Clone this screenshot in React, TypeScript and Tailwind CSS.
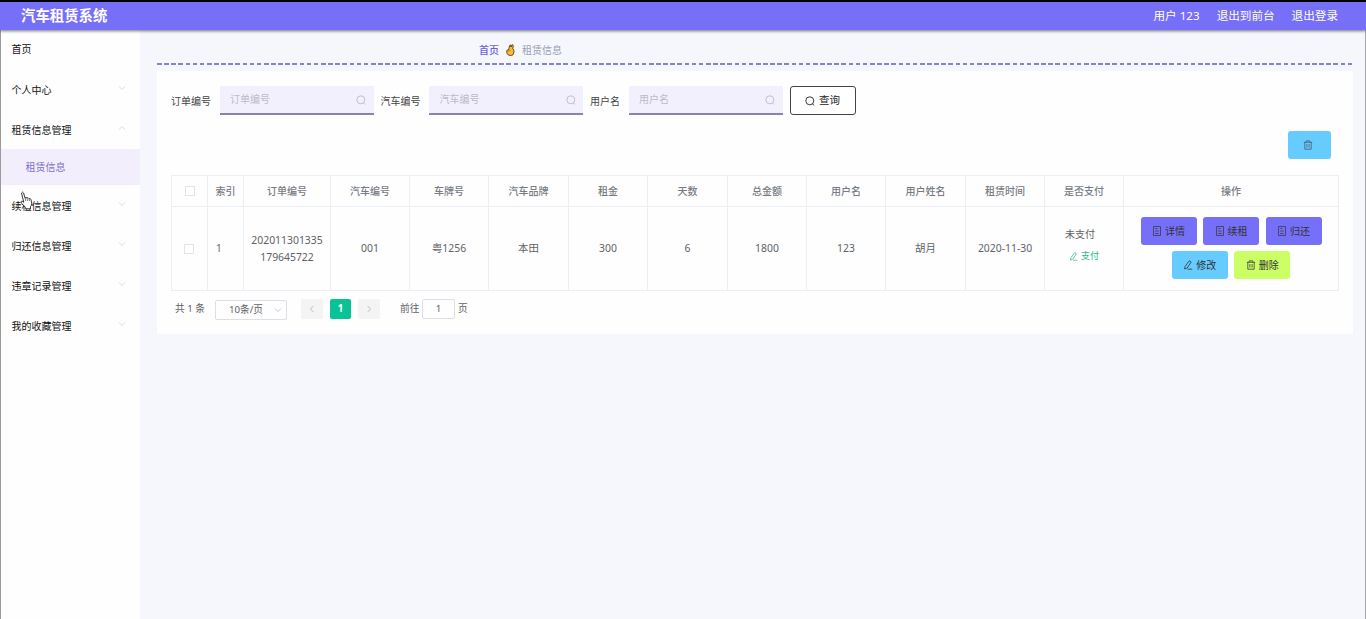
import React from 'react';

// --- Icons ---
const SearchIcon: React.FC<{ className?: string }> = ({ className = '' }) => (
  <svg className={className} width="10" height="10" viewBox="0 0 10 10" fill="none" stroke="currentColor" strokeWidth="0.9">
    <circle cx="4.8" cy="4.8" r="4" />
    <path d="M7.4 7.9 9.2 9.4" />
  </svg>
);

const TrashIcon: React.FC<{ className?: string }> = ({ className = '' }) => (
  <svg className={className} width="10" height="10" viewBox="0 0 10 10" fill="none" stroke="currentColor" strokeWidth="0.75">
    <path d="M0.8 2.3h8.4M3.2 2.2V0.9h3.6v1.3M1.8 2.3v6.9h6.4V2.3M3.9 4v3.5M6.1 4v3.5" />
  </svg>
);

const DocIcon: React.FC = () => (
  <svg width="10" height="10" viewBox="0 0 10 10" fill="none" stroke="currentColor" strokeWidth="0.7">
    <path d="M1.5 0.5h7v9h-7zM3.2 2.5h2.2M3.2 5h3.4M3.2 7.5h3.4" />
  </svg>
);

const EditIcon: React.FC<{ size?: number }> = ({ size = 10 }) => (
  <svg width={size} height={size} viewBox="0 0 10 10" fill="none" stroke="currentColor" strokeWidth="0.8">
    <path d="M6.3 0.8 8.2 2 4.2 8 1.6 9 2 6.5zM4.6 9.2h4.6" />
  </svg>
);

const Chevron: React.FC<{ dir: 'up' | 'down' | 'left' | 'right'; className?: string }> = ({ dir, className = '' }) => {
  const paths = {
    up: 'M1 5.5 4 2.5 7 5.5',
    down: 'M1 2.5 4 5.5 7 2.5',
    left: 'M5.3 1 2.5 4 5.3 7',
    right: 'M2.7 1 5.5 4 2.7 7',
  };
  return (
    <svg className={className} width="8" height="8" viewBox="0 0 8 8" fill="none" stroke="currentColor" strokeWidth="0.9">
      <path d={paths[dir]} />
    </svg>
  );
};

const HandIcon: React.FC = () => (
  <svg width="9" height="12" viewBox="0 0 9 12" stroke="#3c2a08" strokeWidth="0.8" strokeLinejoin="round">
    <path d="M2.7 5.5 3.6 1.5Q4.2.4 4.9 1.4L5 3 5.9.9Q7 .3 7.2 1.4L6.8 5Q8.3 5.6 8 8L7 10.8Q4.8 12.2 2.3 11 .5 9.8.7 7.2.9 5.6 2.7 5.5z" fill="#ffbd2c" />
    <path d="M2.2 6v1.6M4 5.6v1.8" fill="none" strokeWidth="0.4" />
  </svg>
);

const Pointer: React.FC = () => (
  <svg className="absolute left-[20px] top-[191px]" width="13" height="19" viewBox="0 0 13 19" fill="#fff" stroke="#222" strokeWidth="0.9" strokeLinejoin="round">
    <path d="M1.5 2Q2.3.3 3.6 2L5 7Q6 5.7 7 7 8.3 6.2 9 7.7 10.5 7 11 8.8L11.8 12Q11.8 14.5 10.5 15.5V17.8H5.4V16.3L1.7 12.3Q.2 10.7 1.5 10.2 2.6 10 3.8 11.3z" />
    <path d="M5 7l.8 3M7 7.4l.6 2.5M9 8l.5 2.1" fill="none" strokeWidth="0.6" />
  </svg>
);

// --- Sidebar ---
const menus = ['续租信息管理', '归还信息管理', '违章记录管理', '我的收藏管理'];

const MenuItem: React.FC<{ label: string; open?: boolean }> = ({ label, open }) => (
  <li className="flex h-10 items-center justify-between pl-[10.5px] pr-[14px]">
    <span className="pt-[2px]">{label}</span>
    <Chevron dir={open ? 'up' : 'down'} className="-mt-[3px] text-[#d5d5da]" />
  </li>
);

const Sidebar: React.FC = () => (
  <aside className="w-[140px] shrink-0 border-l border-[#9b9b9e] bg-[#fefefe] text-[10px] text-[#111]">
    <ul>
      <li className="flex h-10 items-center pl-[10.5px]">首页</li>
      <MenuItem label="个人中心" />
      <MenuItem label="租赁信息管理" open />
      <li className="flex h-9 items-center bg-[#f2eefb] pl-[24.5px] text-[#7c70d8]">租赁信息</li>
      {menus.map(m => <MenuItem key={m} label={m} />)}
    </ul>
  </aside>
);

// --- Search field ---
const Field: React.FC<{ label: string; labelWidth?: string }> = ({ label, labelWidth = 'w-[48.5px]' }) => (
  <div className="flex shrink-0 items-center">
    <label className={`shrink-0 pt-px text-[#444] ${labelWidth}`}>{label}</label>
    <div className="flex h-[29px] w-[154px] items-center justify-between border-b-2 border-[#8a85a2] bg-[#f3f0fd] pl-[10.5px] pr-[7.5px] text-[#bcbac8]">
      <span>{label}</span>
      <SearchIcon />
    </div>
  </div>
);

// --- Table ---
const columns = [
  { title: '订单编号', value: '202011301335179645722' },
  { title: '汽车编号', value: '001' },
  { title: '车牌号', value: '粤1256' },
  { title: '汽车品牌', value: '本田' },
  { title: '租金', value: '300' },
  { title: '天数', value: '6' },
  { title: '总金额', value: '1800' },
  { title: '用户名', value: '123' },
  { title: '用户姓名', value: '胡月' },
  { title: '租赁时间', value: '2020-11-30' },
];

const widths = [36, 36, 87, 79, 79, 80, 79, 80, 79, 79, 80, 79, 79, 215];

const Checkbox: React.FC = () => <span className="mx-auto block size-[10px] border border-[#e2e4ea] bg-white" />;

const ActionButton: React.FC<{ color: string; icon: React.ReactNode; children: React.ReactNode }> = ({ color, icon, children }) => (
  <button className={`flex h-[28px] w-[56px] items-center justify-center gap-[3px] rounded-[3px] text-[10px] text-[#333] ${color}`}>
    {icon}
    {children}
  </button>
);

const cell = 'border-b border-r border-[#ebeef2] p-0';

const OrderTable: React.FC = () => (
  <table className="w-[1168px] table-fixed border-separate border-spacing-0 border-l border-t border-[#ebeef2] text-center text-[10px] text-[#606266]">
    <colgroup>
      {widths.map((w, i) => <col key={i} style={{ width: w }} />)}
    </colgroup>
    <thead>
      <tr className="h-[31px] text-[#777b82]">
        <th className={cell}><Checkbox /></th>
        <th className={`${cell} font-medium`}>索引</th>
        {columns.map(c => <th key={c.title} className={`${cell} font-medium`}>{c.title}</th>)}
        <th className={`${cell} font-medium`}>是否支付</th>
        <th className={`${cell} font-medium`}>操作</th>
      </tr>
    </thead>
    <tbody>
      <tr className="h-[84px]">
        <td className={`${cell} pr-[2px]`}><Checkbox /></td>
        <td className={`${cell} pl-[8px] text-left`}>1</td>
        {columns.map(c => (
          <td key={c.title} className={`${cell} px-[7px] text-[10.4px] leading-[17px] break-all`}>{c.value}</td>
        ))}
        <td className={cell}>
          <div className="-mt-[7px] flex flex-col items-center gap-[7px]">
            <span className="mr-[8px]">未支付</span>
            <span className="flex items-center gap-[3px] text-[9px] text-[#24b98c]"><EditIcon size={9} />支付</span>
          </div>
        </td>
        <td className={cell}>
          <div className="-mt-px flex flex-wrap justify-center gap-x-[6.5px] gap-y-[6px]">
            <ActionButton color="bg-[#766ff8]" icon={<DocIcon />}>详情</ActionButton>
            <ActionButton color="bg-[#766ff8]" icon={<DocIcon />}>续租</ActionButton>
            <ActionButton color="bg-[#766ff8]" icon={<DocIcon />}>归还</ActionButton>
            <ActionButton color="bg-[#66ccff]" icon={<EditIcon />}>修改</ActionButton>
            <ActionButton color="bg-[#ccff66]" icon={<TrashIcon />}>删除</ActionButton>
          </div>
        </td>
      </tr>
    </tbody>
  </table>
);

// --- Pagination ---
const Pagination: React.FC = () => (
  <div className="mt-[8px] flex h-[21px] items-center pl-[4px] text-[9.7px] text-[#606266]">
    <span className="w-[40px]">共 1 条</span>
    <div className="mt-px flex h-[20px] w-[72px] items-center justify-between rounded-[2px] border border-[#dcdfe6] pl-[13px] pr-[4px]">
      <span>10条/页</span>
      <Chevron dir="down" className="text-[#c0c4cc]" />
    </div>
    <div className="-mt-px ml-[14px] flex gap-[7px]">
      <button className="flex h-[20px] w-[22px] items-center justify-center rounded-[2px] bg-[#f4f4f5] text-[#b5b9c2]"><Chevron dir="left" /></button>
      <button className="h-[20px] w-[21px] rounded-[2px] bg-[#09c295] font-bold leading-[20px] text-white">1</button>
      <button className="flex h-[20px] w-[22px] items-center justify-center rounded-[2px] bg-[#f4f4f5] text-[#b5b9c2]"><Chevron dir="right" /></button>
    </div>
    <span className="ml-[20px] w-[22px]">前往</span>
    <span className="-mt-px h-[20px] w-[33px] rounded-[2px] border border-[#dcdfe6] text-center leading-[18px]">1</span>
    <span className="ml-[3px]">页</span>
  </div>
);

export default function App() {
  return (
    <div className="relative flex h-[619px] w-[1366px] flex-col overflow-hidden bg-[#f6f7fc] font-['Noto_Sans','Noto_Sans_CJK_SC',sans-serif]">
      <header className="z-10 flex h-[30px] shrink-0 items-center justify-between border-t-2 border-black bg-[#766ff8] pl-[21px] pr-[28px] text-white shadow-[0_1px_3px_rgba(0,0,0,0.55)]">
        <h1 className="text-[14.4px] font-bold">汽车租赁系统</h1>
        <nav className="flex gap-[17px] text-[11.6px]">
          <span>用户 123</span>
          <span>退出到前台</span>
          <span>退出登录</span>
        </nav>
      </header>
      <div className="-mt-px flex min-h-0 flex-1">
        <Sidebar />
        <main className="flex-1 border-r border-[#a5a5aa] pl-[17px] pr-[12px] text-[10px]">
          <div className="flex h-[34px] items-center gap-[7px] pl-[322px] pt-[8px]">
            <span className="font-medium text-[#6b60dc]">首页</span>
            <HandIcon />
            <span className="text-[#97a0b2]">租赁信息</span>
          </div>
          <div className="h-[2px] bg-[repeating-linear-gradient(90deg,#8484c6_0_4.6px,transparent_4.6px_7.13px)]" />
          <section className="mt-[6px] h-[263px] w-[1196px] bg-[#fefefe] pl-[14px] pt-[15px]">
            <div className="flex gap-[7px]">
              <Field label="订单编号" />
              <Field label="汽车编号" />
              <Field label="用户名" labelWidth="w-[38.5px]" />
              <button className="flex h-[29px] w-[66px] items-center justify-center gap-[4px] rounded-[3px] border border-[#444] bg-white pt-px text-[10.5px] text-[#222]">
                <SearchIcon />
                查询
              </button>
            </div>
            <div className="mb-[16px] mt-[16px] flex justify-end pr-[22px]">
              <button className="flex h-[28px] w-[43px] items-center justify-center rounded-[3px] bg-[#66ccff] pr-[4px] text-[#456]">
                <TrashIcon />
              </button>
            </div>
            <OrderTable />
            <Pagination />
          </section>
        </main>
      </div>
      <Pointer />
    </div>
  );
}
